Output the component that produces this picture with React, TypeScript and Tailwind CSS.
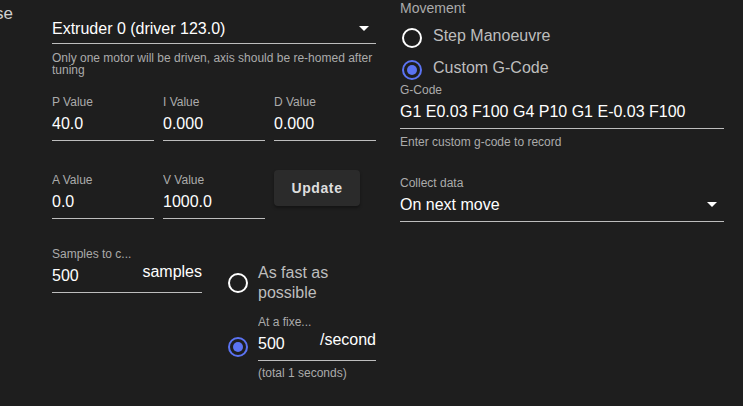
const font = "font-['Liberation_Sans',Arial,sans-serif]"

function Caret() {
  return <div className="w-0 h-0 border-l-[5px] border-r-[5px] border-t-[5px] border-l-transparent border-r-transparent border-t-white mt-[7px] mr-[7px]" />
}

function Field({ label, value, suffix, className = "" }: { label: string; value: string; suffix?: string; className?: string }) {
  return (
    <div className={`border-b border-[#bdbdbd] pb-[6px] ${className}`}>
      <div className="text-[12px] leading-[14px] text-[#ababab] truncate">{label}</div>
      <div className="mt-[5px] flex items-start">
        <div className="flex-1 text-[16px] leading-5 text-white">{value}</div>
        {suffix && <div className="text-[16px] leading-5 text-white -mt-[4px]">{suffix}</div>}
      </div>
    </div>
  )
}

function Radio({ checked }: { checked?: boolean }) {
  return checked ? (
    <div className="w-5 h-5 shrink-0 rounded-full border-2 border-[#5b73f2] flex items-center justify-center">
      <div className="w-[10px] h-[10px] rounded-full bg-[#5b73f2]" />
    </div>
  ) : (
    <div className="w-5 h-5 shrink-0 rounded-full border-2 border-white" />
  )
}

export default function App() {
  return (
    <div className={`w-[743px] h-[406px] overflow-hidden bg-[#1e1e1e] ${font} flex`}>
      <div className="w-[52px] shrink-0 overflow-hidden">
        <div className="-ml-[5px] pt-[2px] text-[17px] leading-6 text-[#d0d0d0]">se</div>
      </div>

      <div className="w-[324px] shrink-0">
        <div className="h-[44px] pt-[19px] border-b border-[#bdbdbd] flex justify-between">
          <span className="text-[16px] leading-5 text-white">Extruder 0 (driver 123.0)</span>
          <Caret />
        </div>
        <p className="mt-[8px] text-[12px] leading-[12px] text-[#ababab]">
          Only one motor will be driven, axis should be re-homed after tuning
        </p>

        <div className="mt-[19px] grid grid-cols-3 gap-x-[9px]">
          <Field label="P Value" value="40.0" />
          <Field label="I Value" value="0.000" />
          <Field label="D Value" value="0.000" />
        </div>

        <div className="mt-[32px] grid grid-cols-3 gap-x-[9px] items-start">
          <Field label="A Value" value="0.0" />
          <Field label="V Value" value="1000.0" />
          <button className="-mt-[3px] w-[86px] h-[36px] rounded bg-[#2b2b2b] shadow-[0_2px_3px_rgba(0,0,0,0.35)] text-[14px] font-bold tracking-[0.6px] text-[#dedede]">
            Update
          </button>
        </div>

        <div className="mt-[28px] flex items-start">
          <Field label="Samples to c..." value="500" suffix="samples" className="w-[150px]" />
          <div className="ml-[26px] flex-1">
            <div className="mt-[16px] flex items-center gap-[10px]">
              <Radio />
              <div className="text-[16px] leading-5 text-[#bdbdbd]">As fast as<br />possible</div>
            </div>
            <div className="mt-[12px] flex items-start gap-[10px]">
              <div className="mt-[22px]"><Radio checked /></div>
              <div className="flex-1">
                <Field label="At a fixe..." value="500" suffix="/second" />
                <div className="mt-[5px] text-[12px] leading-[14px] text-[#ababab]">(total 1 seconds)</div>
              </div>
            </div>
          </div>
        </div>
      </div>

      <div className="ml-[24px] w-[324px] shrink-0">
        <div className="text-[14px] leading-4 text-[#ababab]">Movement</div>
        <div className="mt-[10px] flex items-start gap-[11px] ml-[2px]">
          <div className="mt-[2px]"><Radio /></div>
          <span className="text-[16px] leading-5 text-[#bdbdbd]">Step Manoeuvre</span>
        </div>
        <div className="mt-[10px] flex items-start gap-[11px] ml-[2px]">
          <div className="mt-[2px]"><Radio checked /></div>
          <span className="text-[16px] leading-5 text-[#bdbdbd]">Custom G-Code</span>
        </div>

        <Field className="mt-[3px]" label="G-Code" value="G1 E0.03 F100 G4 P10 G1 E-0.03 F100" />
        <div className="mt-[6px] text-[12px] leading-[14px] text-[#ababab]">Enter custom g-code to record</div>

        <div className="mt-[27px] border-b border-[#bdbdbd] pb-[6px]">
          <div className="text-[12px] leading-[14px] text-[#ababab]">Collect data</div>
          <div className="mt-[5px] flex justify-between">
            <span className="text-[16px] leading-5 text-white">On next move</span>
            <Caret />
          </div>
        </div>
      </div>
    </div>
  )
}
